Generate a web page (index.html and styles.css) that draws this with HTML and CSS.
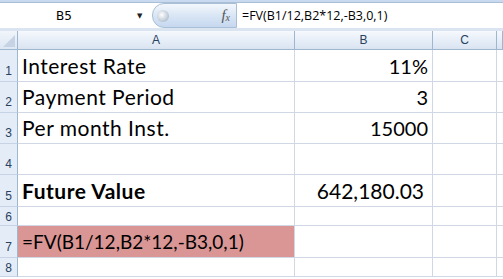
FILE: index.html
```html
<!DOCTYPE html>
<html lang="en">
<head>
    <meta charset="UTF-8">
    <title>Future Value</title>
    <link rel="stylesheet" href="styles.css">
</head>
<body>
    <div class="top-strip"></div>
    <div class="formula-bar">
        <div class="name-box">
            <span class="name">B5</span>
            <span class="arrow">&#9660;</span>
        </div>
        <div class="fx-pill">
            <span class="dot"></span>
            <span class="fx">f<sub>x</sub></span>
        </div>
        <div class="formula">=FV(B1/12,B2*12,-B3,0,1)</div>
    </div>
    <div class="gap-strip"></div>

    <div class="sheet">
        <div class="corner"><span class="tri"></span></div>
        <div class="col-head">A</div>
        <div class="col-head">B</div>
        <div class="col-head">C</div>
        <div class="col-head"></div>

        <div class="row-head">1</div>
        <div class="cell label">Interest Rate</div>
        <div class="cell num">11%</div>
        <div class="cell"></div>
        <div class="cell"></div>

        <div class="row-head">2</div>
        <div class="cell label">Payment Period</div>
        <div class="cell num">3</div>
        <div class="cell"></div>
        <div class="cell"></div>

        <div class="row-head">3</div>
        <div class="cell label">Per month Inst.</div>
        <div class="cell num">15000</div>
        <div class="cell"></div>
        <div class="cell"></div>

        <div class="row-head">4</div>
        <div class="cell"></div>
        <div class="cell"></div>
        <div class="cell"></div>
        <div class="cell"></div>

        <div class="row-head">5</div>
        <div class="cell label bold">Future Value</div>
        <div class="cell num acct">642,180.03</div>
        <div class="cell"></div>
        <div class="cell"></div>

        <div class="row-head short">6</div>
        <div class="cell"></div>
        <div class="cell"></div>
        <div class="cell"></div>
        <div class="cell"></div>

        <div class="row-head">7</div>
        <div class="cell pink">=FV(B1/12,B2*12,-B3,0,1)</div>
        <div class="cell"></div>
        <div class="cell"></div>
        <div class="cell"></div>

        <div class="row-head short">8</div>
        <div class="cell"></div>
        <div class="cell"></div>
        <div class="cell"></div>
        <div class="cell"></div>
    </div>
</body>
</html>
```

FILE: styles.css
```css
body {
    margin: 0;
    width: 503px;
    height: 279px;
    overflow: hidden;
    background-color: #fff;
    font-family: "Lato", "Liberation Sans", sans-serif;
}
.top-strip {
    height: 3px;
    background-color: #c9daf0;
    border-bottom: 1px solid #a9bfd6;
    box-sizing: border-box;
}
.formula-bar {
    display: flex;
    height: 25px;
    background-color: #fff;
    font-family: "DejaVu Sans", sans-serif;
    font-size: 12px;
    color: #000;
}
.name-box {
    width: 152px;
    display: flex;
    align-items: center;
}
.name {
    width: 128px;
    text-align: center;
}
.arrow {
    font-size: 7px;
    margin-left: 9px;
    color: #222;
}
.fx-pill {
    width: 85px;
    display: flex;
    align-items: center;
    justify-content: space-between;
    border-radius: 12px 0 0 12px;
    background: linear-gradient(#f3f7fc, #d7e4f4 55%, #c6d8ef);
    border: 1px solid #a9bfd6;
    box-sizing: border-box;
    padding: 0 6px 0 4px;
}
.dot {
    width: 12px;
    height: 12px;
    border-radius: 50%;
    background: radial-gradient(circle at 40% 40%, #fff, #b8c4d2 70%, #8e9bab);
}
.fx {
    font-family: "Liberation Serif", serif;
    font-style: italic;
    font-size: 15px;
    color: #555;
}
.fx sub {
    font-size: 10px;
    vertical-align: -1px;
}
.formula {
    flex: 1;
    padding-left: 5px;
    display: flex;
    align-items: center;
    font-family: "Open Sans", sans-serif;
    font-size: 12.5px;
}
.gap-strip {
    height: 3px;
    background-color: #dbe5f1;
}
.sheet {
    display: grid;
    grid-template-columns: 18px 277px 138px 64px 6px;
    grid-template-rows: 19px 32px 31px 31px 31px 32px 19px 32px 19px;
}
.sheet > div {
    box-sizing: border-box;
    border-right: 1px solid #d0d7e5;
    border-bottom: 1px solid #d0d7e5;
}
.corner {
    background: linear-gradient(#f1f5fb, #dde7f3);
    border-right: 1px solid #9eb6ce !important;
    border-bottom: 1px solid #9eb6ce !important;
    position: relative;
}
.tri {
    position: absolute;
    right: 2px;
    bottom: 2px;
    width: 0;
    height: 0;
    border-left: 12px solid transparent;
    border-bottom: 12px solid #c5d3e4;
}
.col-head {
    background: linear-gradient(#f6f9fd, #e4ecf7 60%, #dae4f1);
    border-right: 1px solid #9eb6ce !important;
    border-bottom: 1px solid #9eb6ce !important;
    font-family: "Liberation Sans", sans-serif;
    font-size: 12px;
    color: #27415f;
    text-align: center;
    line-height: 18px;
}
.row-head {
    background-color: #e4ecf7;
    border-right: 1px solid #9eb6ce !important;
    border-bottom: 1px solid #c5d3e4 !important;
    font-family: "Liberation Sans", sans-serif;
    font-size: 12px;
    color: #27415f;
    display: flex;
    align-items: flex-end;
    justify-content: center;
    padding-bottom: 3px;
}
.row-head.short {
    padding-bottom: 1px;
}
.cell {
    font-size: 20px;
    line-height: 24px;
    color: #000;
    padding: 0 4px 3px;
    display: flex;
    align-items: flex-end;
    white-space: nowrap;
}
.label {
    font-size: 21px;
    letter-spacing: 0.5px;
}
.num {
    justify-content: flex-end;
}
.acct {
    font-size: 21px;
    padding-right: 8px;
}
.bold {
    font-weight: bold;
}
.pink {
    background-color: #da9694;
    font-size: 19px;
}
```
